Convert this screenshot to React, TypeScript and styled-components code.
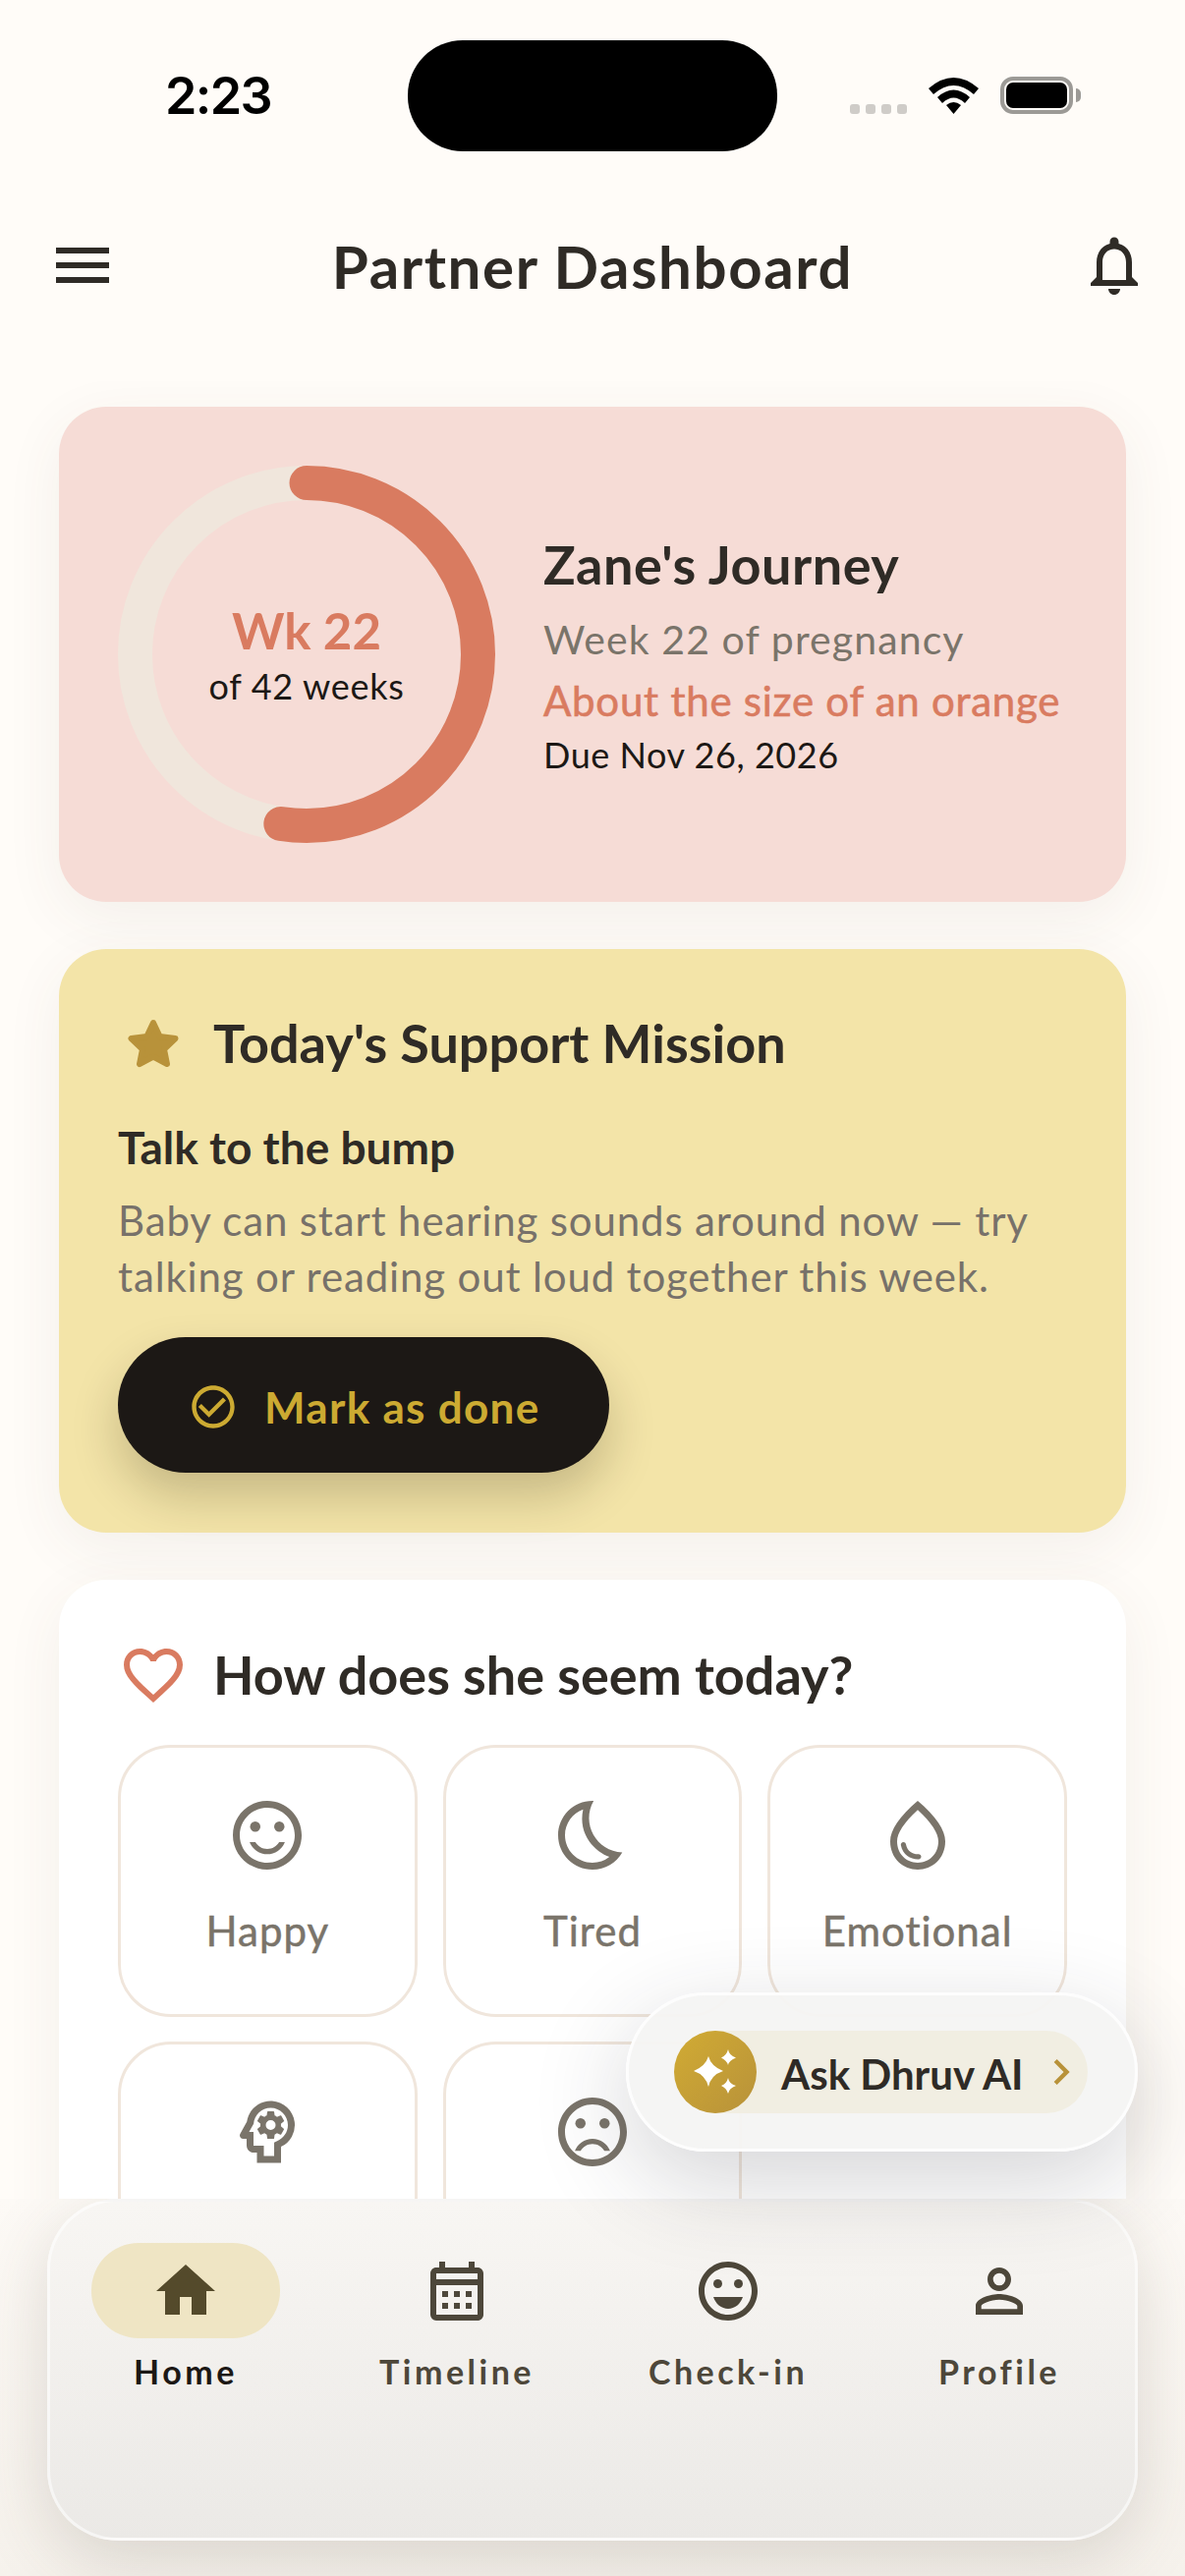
import React from "react";
import styled, { createGlobalStyle } from "styled-components";
import {
  MdMenu, MdNotificationsNone, MdCheckCircleOutline, MdFavoriteBorder,
  MdOutlineSentimentSatisfied, MdOutlineBedtime, MdOutlineWaterDrop, MdOutlinePsychology, MdOutlineSentimentDissatisfied,
  MdHome, MdOutlineCalendarMonth, MdOutlineEmojiEmotions, MdPersonOutline, MdChevronRight,
} from "react-icons/md";

const FONT = `"Lato", "Noto Sans", sans-serif`;

const Global = createGlobalStyle`
  html, body { margin: 0; padding: 0; background: #fffcf8; }
  * { box-sizing: border-box; }
  body { font-family: ${FONT}; }
`;

const Page = styled.div`
  position: relative;
  width: 1206px;
  height: 2622px;
  overflow: hidden;
  display: flex;
  flex-direction: column;
  background: #fffcf8;
  color: #2f2b26;
`;

const StatusBar = styled.div`
  height: 152px;
  padding: 41px 106px 0 168px;
  display: grid;
  grid-template-columns: 247px 376px 1fr;
  align-items: stretch;
`;
const Time = styled.div`
  font-family: "Inter", sans-serif;
  font-size: 52px;
  font-weight: 600;
  line-height: 113px;
  letter-spacing: -1.6px;
  color: #000;
`;
const Island = styled.div`
  background: #000;
  border-radius: 56px;
`;
const StatusIcons = styled.div`
  display: flex;
  align-items: flex-start;
  padding: 37px 0 0 74px;
`;
const SignalDots = styled.div`
  display: flex;
  gap: 6px;
  margin: 28px 22px 0 0;
`;
const SignalDot = styled.span`
  width: 10px;
  height: 10px;
  border-radius: 3px;
  background: #cfccc8;
`;
const Battery = styled.div`
  position: relative;
  width: 74px;
  height: 38px;
  margin-left: 22px;
  padding: 2px;
  border: 4px solid #9c9a96;
  border-radius: 13px;
  &::before {
    content: "";
    display: block;
    height: 100%;
    background: #000;
    border-radius: 7px;
  }
  &::after {
    content: "";
    position: absolute;
    right: -12px;
    top: 8px;
    width: 5px;
    height: 14px;
    border-radius: 0 5px 5px 0;
    background: #9c9a96;
  }
`;

const Header = styled.header`
  height: 236px;
  padding: 0 36px;
  display: grid;
  grid-template-columns: 1fr auto 1fr;
  align-items: center;
  color: #2f2b26;
`;
const HeaderAction = styled.div<{ $end?: boolean }>`
  display: flex;
  justify-content: ${(p) => (p.$end ? "flex-end" : "flex-start")};
  padding-left: ${(p) => (p.$end ? 0 : 12)}px;
  font-size: 72px;
  line-height: 0;
`;
const Title = styled.h1`
  margin: 2px 0 0;
  font-size: 60px;
  font-weight: 700;
  letter-spacing: 1.6px;
  line-height: 72px;
`;

const Main = styled.main`
  flex: 1;
  min-height: 0;
  overflow: hidden;
  padding: 26px 60px 0;
  display: flex;
  flex-direction: column;
  gap: 48px;
`;

const Card = styled.section<{ $bg: string }>`
  flex: none;
  border-radius: 48px;
  background: ${(p) => p.$bg};
  box-shadow: 0 16px 60px rgba(90, 70, 50, 0.07);
`;

const JourneyCard = styled(Card)`
  height: 504px;
  padding-left: 60px;
  display: flex;
  align-items: center;
  gap: 49px;
`;
const RingWrap = styled.div`
  position: relative;
  width: 384px;
  height: 384px;
  flex: none;
`;
const RingLabel = styled.div`
  position: absolute;
  inset: 0;
  display: flex;
  flex-direction: column;
  align-items: center;
  justify-content: center;
`;
const RingWeek = styled.div`
  font-size: 51px;
  font-weight: 700;
  line-height: 62px;
  color: #d97b60;
`;
const RingOf = styled.div`
  margin-top: 2px;
  font-size: 36px;
  letter-spacing: 0.7px;
  line-height: 46px;
  color: #1c1815;
`;
const JourneyText = styled.div`
  display: flex;
  flex-direction: column;
`;
const JourneyName = styled.h2`
  margin: 0 0 15px;
  font-size: 54px;
  font-weight: 700;
  letter-spacing: 0.5px;
  line-height: 64px;
`;
const JourneyWeek = styled.div`
  font-size: 41px;
  letter-spacing: 1.1px;
  line-height: 58px;
  color: #7a746a;
`;
const JourneySize = styled.div`
  font-size: 42px;
  letter-spacing: 0.75px;
  -webkit-text-stroke: 0.6px #d97b60;
  line-height: 66px;
  color: #d97b60;
`;
const JourneyDue = styled.div`
  font-size: 36px;
  letter-spacing: 0.55px;
  line-height: 44px;
  color: #1c1815;
`;

const MissionCard = styled(Card)`
  height: 594px;
  padding: 60px;
`;
const CardHeading = styled.div`
  display: flex;
  align-items: center;
  gap: 25px;
  height: 72px;
`;
const HeadingIcon = styled.span<{ $color: string; $size: number }>`
  width: 72px;
  display: flex;
  justify-content: center;
  color: ${(p) => p.$color};
  font-size: ${(p) => p.$size}px;
  line-height: 0;
`;
const HeadingText = styled.h2`
  margin: 0;
  font-size: 54px;
  font-weight: 700;
  line-height: 72px;
`;
const MissionTitle = styled.h3`
  margin: 38px 0 14px;
  font-size: 46px;
  font-weight: 700;
  line-height: 64px;
`;
const MissionBody = styled.p`
  margin: 0;
  font-size: 42px;
  letter-spacing: 0.85px;
  line-height: 57px;
  color: #77716a;
`;
const DoneButton = styled.button`
  margin-top: 33px;
  width: 500px;
  height: 138px;
  padding: 3px 0 0 71px;
  border: 0;
  border-radius: 69px;
  background: #1c1815;
  color: #ccaa32;
  display: flex;
  align-items: center;
  gap: 26px;
  font-family: ${FONT};
  font-size: 44px;
  font-weight: 700;
  letter-spacing: 1.3px;
  box-shadow: 0 24px 48px rgba(40, 30, 10, 0.22);
  svg { font-size: 52px; }
`;

const MoodCard = styled(Card)`
  padding: 61px 60px 60px;
`;
const MoodGrid = styled.div`
  margin-top: 35px;
  display: grid;
  grid-template-columns: repeat(3, 1fr);
  column-gap: 26px;
  row-gap: 25px;
`;
const MoodCell = styled.div`
  height: 277px;
  padding-top: 47px;
  border: 3px solid #f0e6dc;
  border-radius: 54px;
  background: #fff;
  display: flex;
  flex-direction: column;
  align-items: center;
  color: #7a746a;
  svg { font-size: 84px; }
`;
const MoodLabel = styled.div`
  margin-top: 30px;
  font-size: 42px;
  letter-spacing: 1px;
  -webkit-text-stroke: 0.5px #7a746a;
  line-height: 50px;
`;

const AskPill = styled.div`
  position: absolute;
  left: 637px;
  top: 2028px;
  width: 521px;
  height: 162px;
  padding: 36px 48px 36px 46px;
  border: 3px solid rgba(255, 255, 255, 0.75);
  border-radius: 81px;
  background: rgba(244, 244, 243, 0.94);
  box-shadow: 0 30px 100px rgba(40, 40, 50, 0.2);
`;
const AskInner = styled.div`
  height: 84px;
  border-radius: 42px;
  background: #f1eee2;
  display: flex;
  align-items: center;
`;
const AskText = styled.span`
  margin-top: 3px;
  color: #2f2b26;
  font-size: 42px;
  font-weight: 700;
`;
const AskBadge = styled.span`
  width: 84px;
  height: 84px;
  margin-right: 25px;
  border-radius: 50%;
  background: linear-gradient(135deg, #d1ab33, #b8923a);
  display: flex;
  align-items: center;
  justify-content: center;
  flex: none;
`;
const AskChevron = styled.span`
  margin-left: auto;
  margin-right: 1px;
  color: #b8923a;
  font-size: 52px;
  line-height: 0;
`;

const BottomZone = styled.div`
  flex: none;
  height: 384px;
  padding: 0 48px 36px;
  background: linear-gradient(#fdfaf6, #f6f2ec);
  position: relative;
  overflow: hidden;
`;
const Nav = styled.nav`
  height: 100%;
  border: 3px solid rgba(255, 255, 255, 0.55);
  border-radius: 72px;
  background: linear-gradient(#f8f6f3, #ebe9e6);
  box-shadow: 0 20px 70px rgba(70, 60, 50, 0.17);
  padding-top: 42px;
  display: grid;
  grid-template-columns: repeat(4, 1fr);
  align-items: start;
`;
const NavItem = styled.div`
  display: flex;
  flex-direction: column;
  align-items: center;
`;
const NavIcon = styled.span<{ $active?: boolean }>`
  width: 192px;
  height: 97px;
  border-radius: 48px;
  background: ${(p) => (p.$active ? "#efe5c4" : "transparent")};
  color: ${(p) => (p.$active ? "#544a2b" : "#4d473a")};
  display: flex;
  align-items: center;
  justify-content: center;
  font-size: 72px;
`;
const NavLabel = styled.span<{ $active?: boolean }>`
  margin-top: 14px;
  font-size: 34px;
  font-weight: 700;
  letter-spacing: 3.5px;
  line-height: 40px;
  color: ${(p) => (p.$active ? "#1c1815" : "#4d473a")};
`;

const Wifi = () => (
  <svg width="51" height="38" viewBox="0 0 51 38">
    <path d="M0 12 Q25.5 -10 51 12 L46 18 Q25.5 0 5 18 Z" fill="#000" />
    <path d="M9 21 Q25.5 6 42 21 L37 27 Q25.5 16 14 27 Z" fill="#000" />
    <path d="M18 29 Q25.5 23 33 29 L25.5 38 Z" fill="#000" />
  </svg>
);

const Sparkles = () => (
  <svg width="44" height="46" viewBox="0 0 44 46" fill="#fff">
    <path d="M15 7 Q17.5 17 30 22 Q17.5 26 15 38 Q12 26 0 22 Q12 17 15 7 Z" />
    <path d="M35 0 Q36 6 43 8.5 Q36 11 35 16 Q33.5 11 28 8.5 Q33.5 6 35 0 Z" />
    <path d="M35 29 Q36 35 43 37 Q36 39.5 35 45 Q33.5 39.5 28 37 Q33.5 35 35 29 Z" />
  </svg>
);

const RoundStar = () => (
  <svg width="54" height="50" viewBox="0 0 54 50">
    <path
      d="M27 4 L33.6 18 L49.5 20 L38 31 L41 46 L27 38.6 L13 46 L16 31 L4.5 20 L20.4 18 Z"
      fill="#b8923a" stroke="#b8923a" strokeWidth="6" strokeLinejoin="round"
    />
  </svg>
);

const moods = [
  { id: "happy", label: "Happy", Icon: MdOutlineSentimentSatisfied },
  { id: "tired", label: "Tired", Icon: MdOutlineBedtime },
  { id: "emotional", label: "Emotional", Icon: MdOutlineWaterDrop },
  { id: "mind", Icon: MdOutlinePsychology },
  { id: "sad", Icon: MdOutlineSentimentDissatisfied },
];

const navItems = [
  { label: "Home", Icon: MdHome, active: true },
  { label: "Timeline", Icon: MdOutlineCalendarMonth },
  { label: "Check-in", Icon: MdOutlineEmojiEmotions },
  { label: "Profile", Icon: MdPersonOutline },
];

const R = 174.5;
const C = 2 * Math.PI * R;

export default function App() {
  return (
    <Page>
      <Global />
      <StatusBar>
        <Time>2:23</Time>
        <Island />
        <StatusIcons>
          <SignalDots>
            <SignalDot /><SignalDot /><SignalDot /><SignalDot />
          </SignalDots>
          <Wifi />
          <Battery />
        </StatusIcons>
      </StatusBar>
      <Header>
        <HeaderAction><MdMenu /></HeaderAction>
        <Title>Partner Dashboard</Title>
        <HeaderAction $end><MdNotificationsNone /></HeaderAction>
      </Header>
      <Main>
        <JourneyCard $bg="#f6dcd6">
          <RingWrap>
            <svg width="384" height="384" viewBox="0 0 384 384">
              <circle cx="192" cy="192" r={R} fill="none" stroke="#f0e6dc" strokeWidth="35" />
              <circle
                cx="192" cy="192" r={R} fill="none" stroke="#d97b60" strokeWidth="35"
                strokeLinecap="round" strokeDasharray={`${(C * 22) / 42} ${C}`}
                transform="rotate(-90 192 192)"
              />
            </svg>
            <RingLabel>
              <RingWeek>Wk 22</RingWeek>
              <RingOf>of 42 weeks</RingOf>
            </RingLabel>
          </RingWrap>
          <JourneyText>
            <JourneyName>Zane's Journey</JourneyName>
            <JourneyWeek>Week 22 of pregnancy</JourneyWeek>
            <JourneySize>About the size of an orange</JourneySize>
            <JourneyDue>Due Nov 26, 2026</JourneyDue>
          </JourneyText>
        </JourneyCard>

        <MissionCard $bg="#f3e4a8">
          <CardHeading>
            <HeadingIcon $color="#b8923a" $size={66}><RoundStar /></HeadingIcon>
            <HeadingText>Today's Support Mission</HeadingText>
          </CardHeading>
          <MissionTitle>Talk to the bump</MissionTitle>
          <MissionBody>
            Baby can start hearing sounds around now — try<br />
            talking or reading out loud together this week.
          </MissionBody>
          <DoneButton><MdCheckCircleOutline />Mark as done</DoneButton>
        </MissionCard>

        <MoodCard $bg="#ffffff">
          <CardHeading>
            <HeadingIcon $color="#d97b60" $size={72}><MdFavoriteBorder /></HeadingIcon>
            <HeadingText>How does she seem today?</HeadingText>
          </CardHeading>
          <MoodGrid>
            {moods.map(({ id, label, Icon }) => (
              <MoodCell key={id}>
                <Icon />
                {label && <MoodLabel>{label}</MoodLabel>}
              </MoodCell>
            ))}
          </MoodGrid>
        </MoodCard>
      </Main>
      <BottomZone>
        <Nav>
          {navItems.map(({ label, Icon, active }) => (
            <NavItem key={label}>
              <NavIcon $active={active}><Icon /></NavIcon>
              <NavLabel $active={active}>{label}</NavLabel>
            </NavItem>
          ))}
        </Nav>
      </BottomZone>
      <AskPill>
        <AskInner>
          <AskBadge><Sparkles /></AskBadge>
          <AskText>Ask Dhruv AI</AskText>
          <AskChevron><MdChevronRight /></AskChevron>
        </AskInner>
      </AskPill>
    </Page>
  );
}
